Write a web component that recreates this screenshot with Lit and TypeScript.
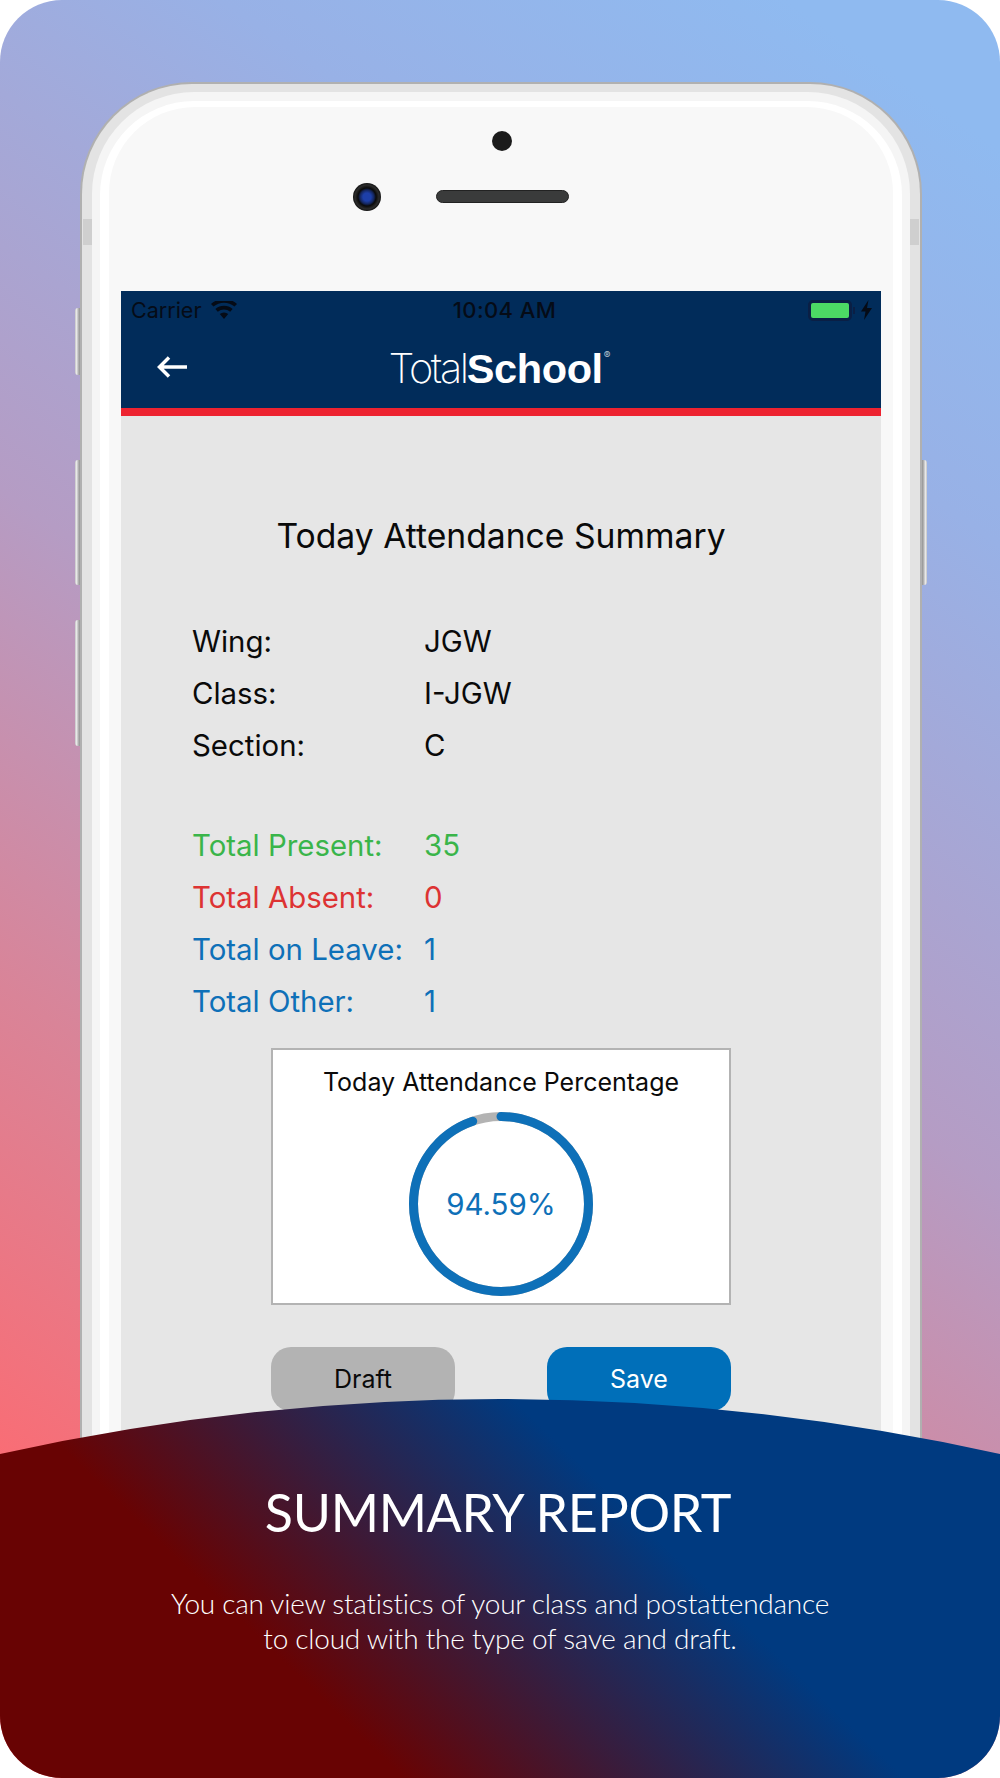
import { LitElement, html, css } from "lit";
import { customElement } from "lit/decorators.js";

const info = [["Wing:", "JGW"], ["Class:", "I-JGW"], ["Section:", "C"]];
const totals = [
  ["Total Present:", "35", "green"],
  ["Total Absent:", "0", "red"],
  ["Total on Leave:", "1", "blue"],
  ["Total Other:", "1", "blue"],
];
const R = 87.5;
const C = 2 * Math.PI * R;
const PCT = 94.59;

@customElement("app-root")
export class AppRoot extends LitElement {
  static styles = css`
    :host { display: block; width: 1000px; height: 1778px; background: #fff; font-family: "Inter", "Liberation Sans", sans-serif; }
    .card { position: relative; width: 1000px; height: 1778px; box-sizing: border-box; padding: 82px 78px 0 80px; border-radius: 62px; overflow: hidden;
      background: linear-gradient(215deg, #8fbaf0 6%, #98b1e6 22%, #b59cc4 48%, #d98498 68%, #f96d75 87%); }
    .phone { position: relative; width: 842px; height: 1620px; box-sizing: border-box; background: #e3e3e3; border: 2px solid #b0b0b0; border-bottom: 0; border-radius: 112px 112px 0 0; padding: 8px 10px 0; }
    .l2 { height: 100%; box-sizing: border-box; background: #f5f5f5; border-radius: 102px 102px 0 0; padding: 9px 8px 0; }
    .l3 { height: 100%; box-sizing: border-box; background: #fff; border-radius: 94px 94px 0 0; padding: 6px 9px 0; }
    .l4 { position: relative; height: 100%; box-sizing: border-box; background: #f8f8f8; border-radius: 86px 86px 0 0; padding: 184px 12px 0 12px; }
    .band { position: absolute; top: 135px; width: 9px; height: 26px; background: #cfcfcf; }
    .band.l { left: 1px; } .band.r { right: 1px; }
    .side { position: absolute; width: 5px; background: linear-gradient(90deg, #c4c4c4, #e8e8e8 30%, #9c9c9c 85%); border-radius: 3px 0 0 3px; }
    .side.a { left: -7px; top: 224px; height: 67px; }
    .side.b { left: -7px; top: 376px; height: 125px; }
    .side.c { left: -7px; top: 536px; height: 126px; }
    .side.d { right: -7px; top: 376px; height: 125px; transform: scaleX(-1); }
    .dot { position: absolute; left: 383px; top: 24px; width: 20px; height: 20px; border-radius: 50%; background: #1b1b1b; }
    .speaker { position: absolute; left: 327px; top: 83px; width: 133px; height: 13px; box-sizing: border-box; border-radius: 7px; background: #3a3b3b; border: 1px solid #222; }
    .camera { position: absolute; left: 244px; top: 76px; width: 28px; height: 28px; border-radius: 50%; background: radial-gradient(circle, #1d3fa8 0 4px, #14265e 7px, #0a0a0a 9px, #2c2c2c 12px, #111 14px); }
    .screen { height: 100%; background: #e6e6e6; color: #0a0a0a; }
    .header { background: #012c5a; height: 117px; border-bottom: 8px solid #ed2330; box-sizing: content-box; }
    .status { height: 38px; display: grid; grid-template-columns: 1fr auto 1fr; align-items: center; padding: 0 9px 0 10px; color: #050b16; font-size: 21.500px; }
    .status-l { display: flex; align-items: center; gap: 10px; }
    .status-r { display: flex; align-items: center; justify-content: flex-end; gap: 6px; }
    .time { font-weight: 500; font-size: 22px; letter-spacing: .4px; margin-left: 6px; }
    .battery { display: flex; align-items: center; gap: 1px; }
    .batt { width: 44px; height: 21px; box-sizing: border-box; border: 3px solid #0a1f45; border-radius: 5px; }
    .batt i { display: block; height: 100%; background: #4cd964; border-radius: 2px; }
    .nub { width: 2px; height: 7px; background: #0a1f45; }
    .nav { position: relative; display: flex; justify-content: center; height: 79px; align-items: flex-start; }
    .back { position: absolute; left: 36px; top: 27px; }
    .logo { color: #fff; font-size: 41.500px; line-height: 46px; margin: 16px 0 0 -3px; white-space: nowrap; }
    .logo .t { font-family: "Inter", sans-serif; font-weight: 200; letter-spacing: -2.400px; }
    .logo .s { font-family: "Liberation Sans", sans-serif; font-weight: 700; letter-spacing: -.400px; }
    .logo sup { font-size: 10px; line-height: 0; vertical-align: 24px; color: #b7c2d0; margin-left: 1px; letter-spacing: 0; }
    .title { margin: 0; padding-top: 100px; text-align: center; font-size: 33.700px; line-height: 40px; font-weight: 400; }
    .rows { padding-left: 71px; font-size: 29.400px; }
    .info { margin-top: 60px; }
    .tot { margin-top: 48px; }
    .row { display: grid; grid-template-columns: 232px auto; height: 52px; line-height: 52px; }
    .green { color: #3ab54a; } .red { color: #dd3333; } .blue { color: #0e70b8; }
    .chart { box-sizing: border-box; width: 460px; height: 257px; margin: 20px 0 0 150px; background: #fff; border: 2px solid #b3b3b3; display: flex; flex-direction: column; align-items: center; }
    .chart h3 { margin: 0; padding-top: 14px; font-size: 25px; line-height: 36px; font-weight: 400; }
    .ring { position: relative; width: 184px; height: 184px; margin-top: 12px; }
    .ring span { position: absolute; inset: 0; display: flex; align-items: center; justify-content: center; font-size: 29.500px; font-weight: 400; color: #0e70b8; }
    .btns { display: flex; justify-content: space-between; width: 460px; margin: 42px 0 0 150px; }
    .btn { width: 184px; height: 64px; border-radius: 20px; display: flex; align-items: center; justify-content: center; font-size: 25px; }
    .draft { background: #b3b3b3; color: #0a0a0a; } .save { background: #006fb9; color: #fff; }
    .panel { position: absolute; left: 0; bottom: 0; width: 1000px; height: 379px; color: #fff; text-align: center; font-family: "Lato", sans-serif; font-weight: 300;
      clip-path: path("M0 55 Q500 -55 1000 55 V379 H0 Z");
      background: linear-gradient(44deg, #680303 29%, #003a80 65%); }
    .panel h2 { margin: 0; padding: 81px 4px 0 0; font-size: 52px; line-height: 64px; font-weight: 400; letter-spacing: -.3px; }
    .panel p { margin: 0; padding-top: 42px; font-size: 28px; line-height: 35px; font-weight: 300; letter-spacing: -.250px; }
  `;

  render() {
    const dash = (C * PCT) / 100;
    return html`
      <div class="card">
        <div class="phone">
          <i class="side a"></i><i class="side b"></i><i class="side c"></i><i class="side d"></i>
          <i class="band l"></i><i class="band r"></i>
          <div class="l2"><div class="l3"><div class="l4">
            <i class="dot"></i><i class="speaker"></i><i class="camera"></i>
            <div class="screen">
              <div class="header">
                <div class="status">
                  <div class="status-l">
                    <span>Carrier</span>
                    <svg width="26" height="18" viewBox="0 0 26 18" fill="#050b16"><path d="M13 18l-4.200-5a6.400 6.400 0 0 1 8.400 0zM6.800 10.800l-2.400-2.800a13.200 13.200 0 0 1 17.200 0l-2.400 2.800a9.600 9.600 0 0 0-12.400 0zM2.500 5.600L0 3a19.500 19.500 0 0 1 26 0l-2.500 2.600a16 16 0 0 0-21 0z"/></svg>
                  </div>
                  <span class="time">10:04 AM</span>
                  <div class="status-r">
                    <div class="battery"><div class="batt"><i></i></div><div class="nub"></div></div>
                    <svg width="11" height="20" viewBox="0 0 11 20" fill="#050b16"><path d="M7.500 0L0 11.500h4.500L3 20l8-12H6z"/></svg>
                  </div>
                </div>
                <div class="nav">
                  <svg class="back" width="30" height="22" viewBox="0 0 30 22" fill="none" stroke="#fff" stroke-width="3.500"><path d="M30 11H3M12 1.500L2.500 11l9.500 9.500"/></svg>
                  <div class="logo"><span class="t">Total</span><span class="s">School</span><sup>®</sup></div>
                </div>
              </div>
              <h1 class="title">Today Attendance Summary</h1>
              <div class="rows info">${info.map(([k, v]) => html`<div class="row"><span>${k}</span><span>${v}</span></div>`)}</div>
              <div class="rows tot">${totals.map(([k, v, c]) => html`<div class="row ${c}"><span>${k}</span><span>${v}</span></div>`)}</div>
              <div class="chart">
                <h3>Today Attendance Percentage</h3>
                <div class="ring">
                  <svg width="184" height="184" viewBox="0 0 184 184" fill="none" stroke-width="9">
                    <circle cx="92" cy="92" r="${R}" stroke="#b3b3b3"/>
                    <circle cx="92" cy="92" r="${R}" stroke="#0e70b8" stroke-linecap="round" stroke-dasharray="${dash} ${C}" transform="rotate(-90 92 92)"/>
                  </svg>
                  <span>94.59%</span>
                </div>
              </div>
              <div class="btns"><div class="btn draft">Draft</div><div class="btn save">Save</div></div>
            </div>
          </div></div></div>
        </div>
        <div class="panel">
          <h2>SUMMARY REPORT</h2>
          <p>You can view statistics of your class and postattendance<br>to cloud with the type of save and draft.</p>
        </div>
      </div>
    `;
  }
}
